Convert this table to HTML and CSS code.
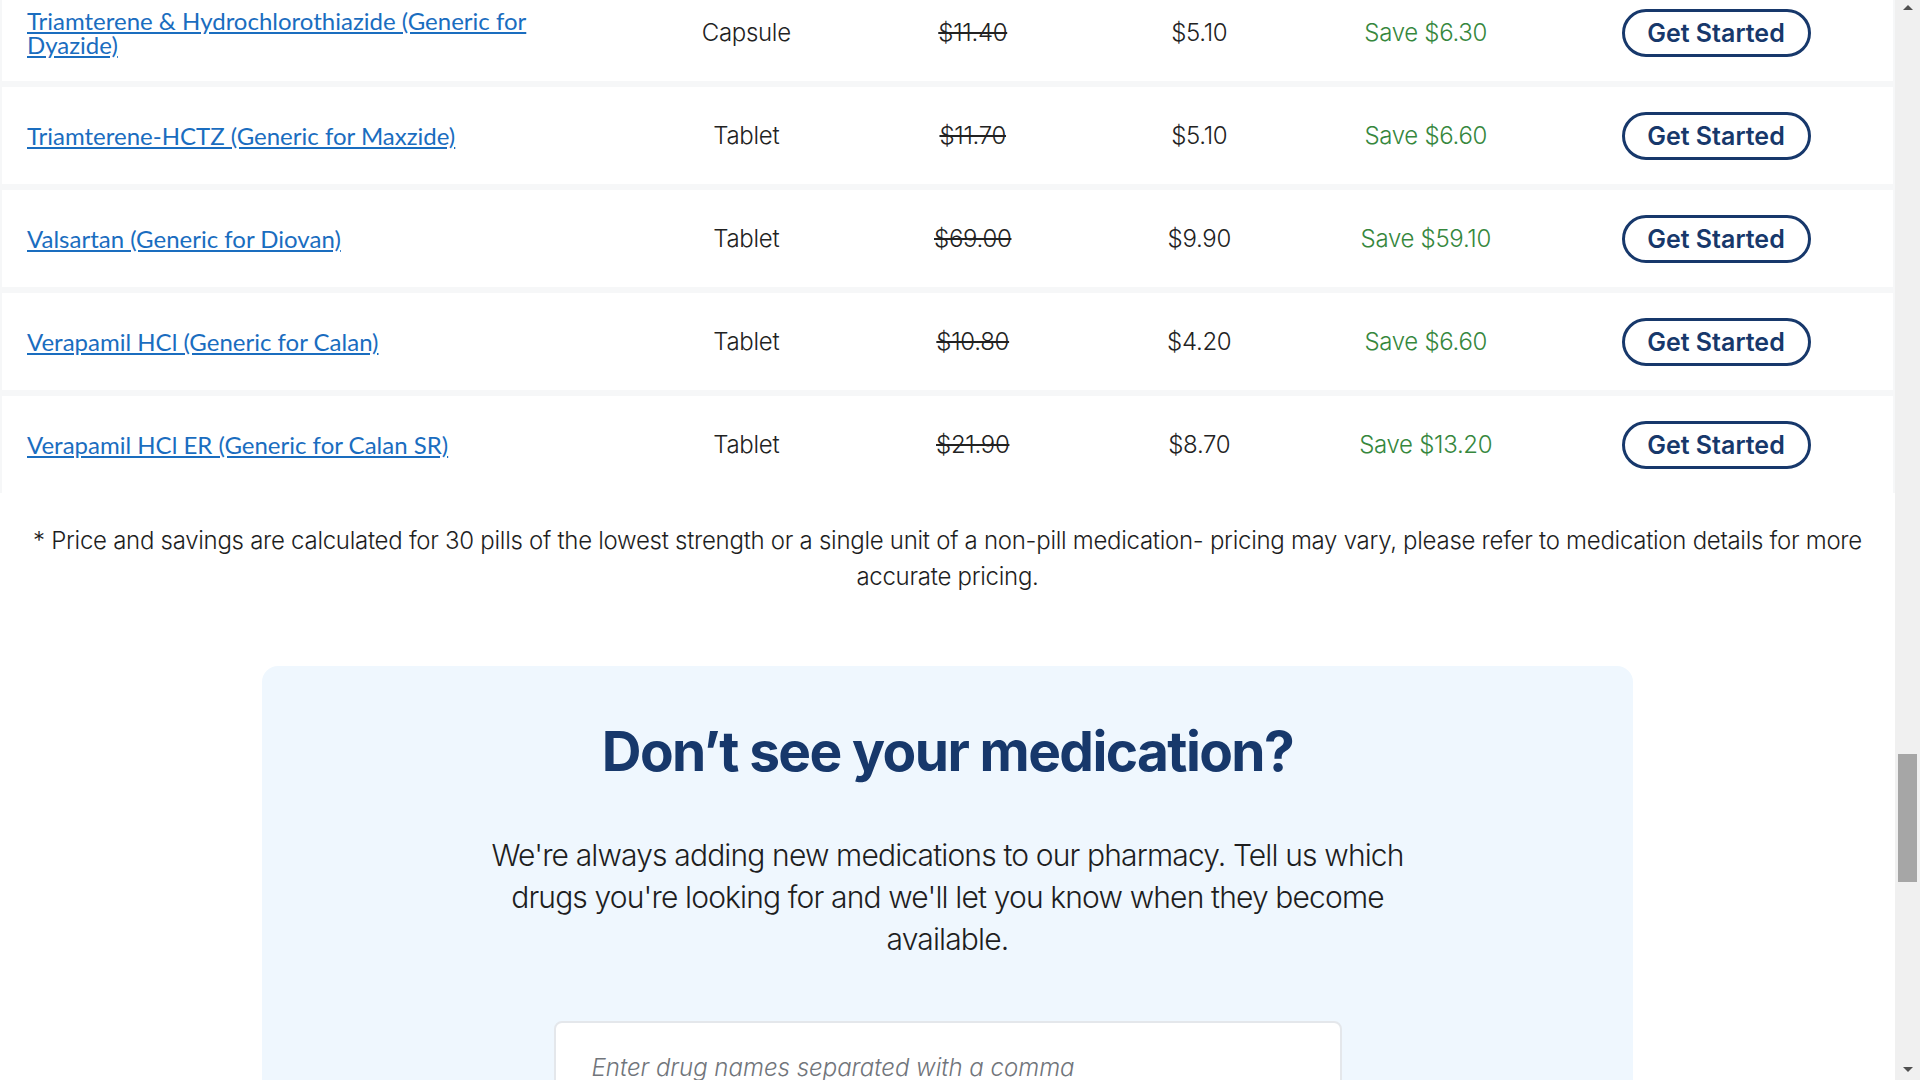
FILE: index.html
```html
<!DOCTYPE html>
<html lang="en">
<head>
    <meta charset="UTF-8">
    <meta name="viewport" content="width=device-width, initial-scale=1.0">
    <title>Medication Prices</title>
    <link rel="stylesheet" href="styles.css">
</head>
<body>
    <div class="page">
        <main class="content">
            <div class="med-list">
                <div class="med-row">
                    <div class="med-name"><a href="#">Triamterene &amp; Hydrochlorothiazide (Generic for Dyazide)</a></div>
                    <div class="cell">Capsule</div>
                    <div class="cell old-price">$11.40</div>
                    <div class="cell">$5.10</div>
                    <div class="cell save">Save $6.30</div>
                    <div class="cell"><button class="btn-start">Get Started</button></div>
                </div>
                <div class="med-row">
                    <div class="med-name"><a href="#">Triamterene-HCTZ (Generic for Maxzide)</a></div>
                    <div class="cell">Tablet</div>
                    <div class="cell old-price">$11.70</div>
                    <div class="cell">$5.10</div>
                    <div class="cell save">Save $6.60</div>
                    <div class="cell"><button class="btn-start">Get Started</button></div>
                </div>
                <div class="med-row">
                    <div class="med-name"><a href="#">Valsartan (Generic for Diovan)</a></div>
                    <div class="cell">Tablet</div>
                    <div class="cell old-price">$69.00</div>
                    <div class="cell">$9.90</div>
                    <div class="cell save">Save $59.10</div>
                    <div class="cell"><button class="btn-start">Get Started</button></div>
                </div>
                <div class="med-row">
                    <div class="med-name"><a href="#">Verapamil HCl (Generic for Calan)</a></div>
                    <div class="cell">Tablet</div>
                    <div class="cell old-price">$10.80</div>
                    <div class="cell">$4.20</div>
                    <div class="cell save">Save $6.60</div>
                    <div class="cell"><button class="btn-start">Get Started</button></div>
                </div>
                <div class="med-row">
                    <div class="med-name"><a href="#">Verapamil HCl ER (Generic for Calan SR)</a></div>
                    <div class="cell">Tablet</div>
                    <div class="cell old-price">$21.90</div>
                    <div class="cell">$8.70</div>
                    <div class="cell save">Save $13.20</div>
                    <div class="cell"><button class="btn-start">Get Started</button></div>
                </div>
            </div>

            <p class="footnote">* Price and savings are calculated for 30 pills of the lowest strength or a single unit of a non-pill medication- pricing may vary, please refer to medication details for more accurate pricing.</p>

            <section class="request-box">
                <h2>Don’t see your medication?</h2>
                <p class="request-text">We're always adding new medications to our pharmacy. Tell us which drugs you're looking for and we'll let you know when they become available.</p>
                <input class="request-input" type="text" placeholder="Enter drug names separated with a comma">
            </section>
        </main>

        <div class="scrollbar">
            <span class="arrow arrow-up"></span>
            <div class="track"><div class="thumb"></div></div>
            <span class="arrow arrow-down"></span>
        </div>
    </div>
</body>
</html>
```

FILE: styles.css
```css
html, body {
    margin: 0;
    height: 100%;
    overflow: hidden;
}

body {
    font-family: Inter, "Liberation Sans", sans-serif;
    color: #222;
    background-color: #fff;
}

.page {
    display: flex;
    height: 100vh;
}

.content {
    flex: 1;
    min-width: 0;
}

/* medication table */
.med-list {
    display: flex;
    flex-direction: column;
    gap: 6px;
    margin-top: -16px;
    padding: 0 2px;
    background-color: #f6f7f8;
}

.med-row {
    display: grid;
    grid-template-columns: 606px repeat(4, 226.5px) 1fr;
    align-items: center;
    height: 97px;
    padding-left: 25px;
    background-color: #fff;
}

.med-name {
    padding-right: 50px;
    font-family: Lato, "Liberation Sans", sans-serif;
    font-size: 24px;
    line-height: 1;
}

.med-name a {
    color: #1a6dbf;
}

.cell {
    text-align: center;
    font-size: 24px;
    font-weight: 300;
    letter-spacing: -0.3px;
    color: #222;
}

.old-price {
    text-decoration: line-through;
    text-decoration-thickness: 2px;
}

.save {
    color: #36873d;
}

.btn-start {
    width: 189px;
    height: 48px;
    border: 3px solid #17386b;
    border-radius: 24px;
    background-color: #fff;
    color: #17386b;
    font-family: Inter, "Liberation Sans", sans-serif;
    font-size: 25px;
    font-weight: 600;
    cursor: pointer;
}

.footnote {
    margin: 30px 0 0;
    padding: 0 18px;
    text-align: center;
    font-size: 24px;
    font-weight: 300;
    line-height: 36px;
    letter-spacing: -0.28px;
    color: #1e1e1e;
}

/* request section */
.request-box {
    width: 1371px;
    margin: 71px auto 0;
    padding-top: 54px;
    box-sizing: border-box;
    border-radius: 16px;
    background-color: #eff7fe;
    text-align: center;
    height: 600px;
}

.request-box h2 {
    margin: 0;
    font-size: 55px;
    line-height: 62px;
    font-weight: 700;
    letter-spacing: -1.6px;
    color: #17386b;
}

.request-text {
    max-width: 940px;
    margin: 52px auto 0;
    font-size: 30px;
    font-weight: 300;
    line-height: 42px;
    letter-spacing: -0.85px;
    color: #1e1e1e;
}

.request-input {
    display: block;
    width: 788px;
    height: 120px;
    margin: 61px auto 0;
    padding: 0 36px 28px;
    box-sizing: border-box;
    border: 2px solid #e4e7eb;
    border-radius: 8px;
    background-color: #fff;
    font-family: Inter, "Liberation Sans", sans-serif;
    font-size: 24px;
    font-weight: 300;
}

.request-input::placeholder {
    font-style: italic;
    color: #71757b;
}

/* fake window scrollbar */
.scrollbar {
    width: 25px;
    display: flex;
    flex-direction: column;
    align-items: center;
    background-color: #f0f0f0;
}

.arrow {
    width: 0;
    height: 0;
    border-left: 5px solid transparent;
    border-right: 5px solid transparent;
}

.arrow-up {
    margin: 5px 0 6px;
    border-bottom: 5px solid #505050;
}

.arrow-down {
    margin: 6px 0 8px;
    border-top: 5px solid #505050;
}

.track {
    flex: 1;
    width: 100%;
}

.thumb {
    width: 19px;
    height: 128px;
    margin: 738px auto 0;
    background-color: #a6a6a6;
}
```
